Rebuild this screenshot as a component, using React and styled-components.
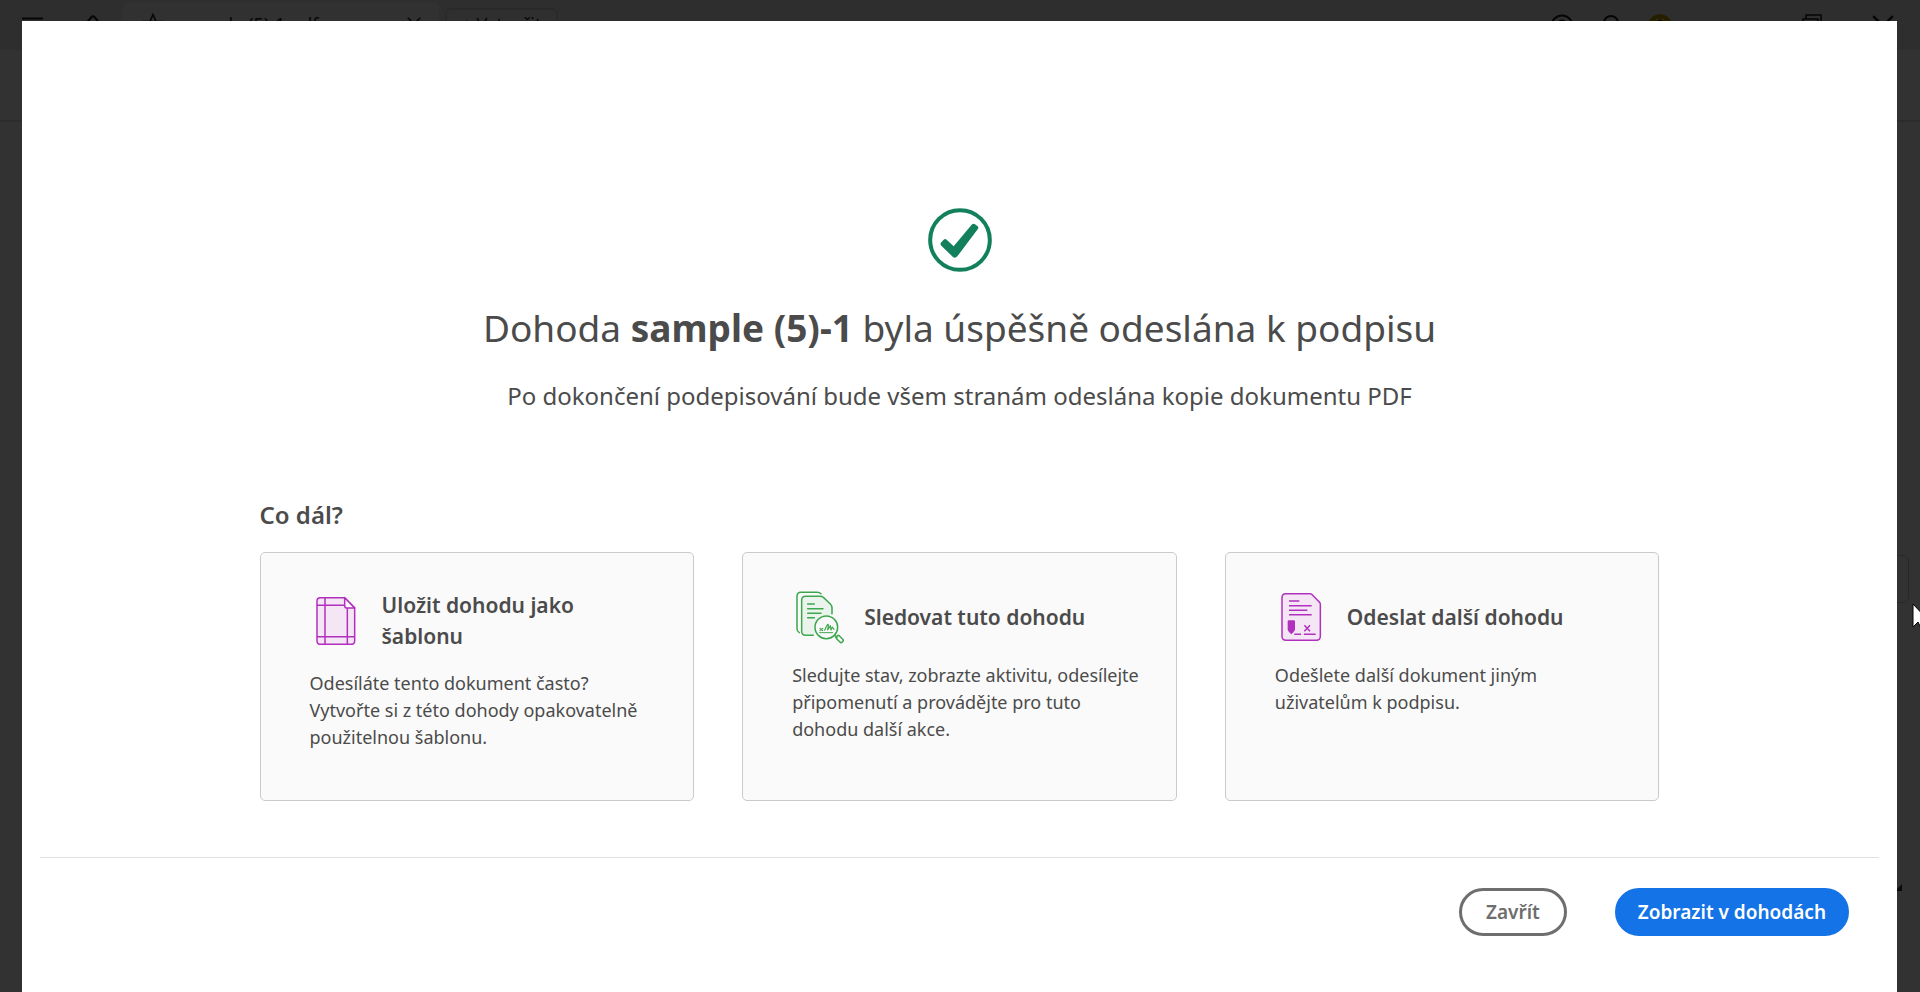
import React from 'react'
import styled, { createGlobalStyle } from 'styled-components';

const MenuIcon = () => (
  <svg width="22" height="18" viewBox="0 0 22 18" stroke="#1c1c1c" strokeWidth="2">
    <path d="M0 1.5h21M0 9h21M0 16.5h21" />
  </svg>
)

const HomeIcon = () => (
  <svg width="22" height="22" viewBox="0 0 22 22" fill="none" stroke="#1c1c1c" strokeWidth="2">
    <path d="M2 11 9.500 2q1.500-1.500 3 0L20 11M5 9v11h12V9" />
  </svg>
)

const StarIcon = () => (
  <svg width="22" height="22" viewBox="0 0 22 22" fill="none" stroke="#1c1c1c" strokeWidth="1.600">
    <path d="M11 1.500 14 8.500h7l-5.500 4.500 2 7L11 16l-6.500 4 2-7L1 8.500h7z" />
  </svg>
)

const HelpIcon = () => (
  <svg width="24" height="24" viewBox="0 0 24 24" fill="none" stroke="#1c1c1c" strokeWidth="2">
    <circle cx="12" cy="12" r="10.500" />
    <path d="M9 9.500c0-4 6-4 6 0 0 2.500-3 2-3 5M12 16.500v2" />
  </svg>
)

const BellIcon = () => (
  <svg width="22" height="24" viewBox="0 0 22 24" fill="none" stroke="#1c1c1c" strokeWidth="2">
    <path d="M4 17V9c0-9.500 14-9.500 14 0v8l2 2H2zM9 21h4" />
  </svg>
)

const AvatarIcon = () => (
  <svg width="24" height="24" viewBox="0 0 24 24">
    <circle cx="12" cy="12" r="12" fill="#b89c00" />
    <circle cx="12" cy="12" r="6" fill="#6a1400" />
    <path d="M8 6l1-2 1 2zM14 6l1-2 1 2z" fill="#fff" />
  </svg>
)

const RestoreIcon = () => (
  <svg width="20" height="24" viewBox="0 0 20 24" fill="none" stroke="#1c1c1c" strokeWidth="1.500">
    <path d="M4 5V1h15v16h-3M1 5h15v18H1z" />
  </svg>
)

const CloseIcon = ({ size = 22 }) => (
  <svg width={size} height={size} viewBox="0 0 18 18" stroke="#1c1c1c" strokeWidth="2">
    <path d="M1 1l16 16M17 1 1 17" />
  </svg>
)

const CheckIcon = () => (
  <svg width="64" height="64" viewBox="54 54 192 192">
    <circle cx="150" cy="150" r="89.500" fill="none" stroke="#12805c" strokeWidth="12" />
    <path
      d="M94 157 101 149Q105 145 110 149L131 169 185 104Q190 99 195 103L203 109Q207 113 203 118L142 199Q135 207 128 200L94 167Q89 162 94 157Z"
      fill="#12805c"
    />
  </svg>
)

const TemplateIcon = () => (
  <svg width="52" height="54" viewBox="30 42 156 162" fill="none" stroke="#b130bd" strokeWidth="4.500" strokeLinejoin="round">
    <path d="M61 53H134L164 83V182Q164 193 153 193H62Q51 193 51 182V63Q51 53 61 53Z" fill="#f4e6f5" />
    <path d="M134 53V77Q134 84 141 84H164Z" fill="#fafafa" />
    <path d="M75 53V193M142 85V193M51 76H134M51 170H164" />
  </svg>
)

const TrackIcon = () => (
  <svg width="52" height="54" viewBox="36 30 156 162" fill="none" stroke="#3da74e" strokeWidth="4.500" strokeLinecap="round" strokeLinejoin="round">
    <path d="M58 158Q51 154 51 146V49Q51 37 63 37H111Q119 37 123 41" />
    <path d="M100 166H77Q65 166 65 154V61Q65 49 77 49H120Q126 49 131 53L151 72Q156 77 156 84V101" fill="#ebf4ec" />
    <path d="M83 72H103M83 86H129M83 100H123M83 113H103" />
    <circle cx="139" cy="142" r="34" fill="#fafafa" />
    <path d="M119 158H158" strokeWidth="3" />
    <path d="M120 145l8 7M128 145l-8 7M134 151l7-15q5-7 4 2l-2 12 8-13 2 13 4-9 5 7" strokeWidth="3.500" />
    <path d="M164 166 171 173" />
    <rect x="167" y="171" width="24" height="12" rx="5" transform="rotate(45 179 177)" />
  </svg>
)

const SendIcon = () => (
  <svg width="52" height="54" viewBox="45 30 156 162" fill="none" stroke="#b130bd" strokeWidth="4.500" strokeLinejoin="round">
    <path d="M77 41H150Q153 41 155 43L177 65Q181 68 181 73V169Q181 181 169 181H78Q66 181 66 169V53Q66 41 77 41Z" fill="#f4e6f5" />
    <path d="M87 63H118M87 77H155M87 91H142M87 104H155M103 163H123M132 163H167" />
    <path d="M133 136l17 18M150 136l-17 18" />
    <path d="M83 124Q83 121 87 121H101Q105 121 105 124V148Q105 152 101 156L94 163 87 156Q83 152 83 148Z" fill="#b130bd" stroke="none" />
  </svg>
)

const steps = [
  {
    icon: TemplateIcon,
    title: 'Uložit dohodu jako šablonu',
    text: 'Odesíláte tento dokument často? Vytvořte si z této dohody opakovatelně použitelnou šablonu.',
  },
  {
    icon: TrackIcon,
    title: 'Sledovat tuto dohodu',
    text: 'Sledujte stav, zobrazte aktivitu, odesílejte připomenutí a provádějte pro tuto dohodu další akce.',
  },
  {
    icon: SendIcon,
    title: 'Odeslat další dohodu',
    text: 'Odešlete další dokument jiným uživatelům k podpisu.',
  },
]

const StepCard = ({ step }) => {
  const Icon = step.icon

  return (
    <Card type="button">
      <CardHead>
        <Icon />
        <CardTitle>{step.title}</CardTitle>
      </CardHead>
      <CardText>{step.text}</CardText>
    </Card>
  )
}

const App = () => {
  return (
    <>
      <GlobalStyle />
      <Shell>
        <TabBar>
          <MenuIcon />
          <HomeIcon />
          <Tab>
            <StarIcon />
            <TabName>sample (5)-1.pdf</TabName>
            <CloseIcon size={14} />
          </Tab>
          <CreateTab>+ Vytvořit</CreateTab>
          <WindowTools>
            <HelpIcon />
            <BellIcon />
            <AvatarIcon />
          </WindowTools>
          <WindowButtons>
            <RestoreIcon />
            <CloseIcon />
          </WindowButtons>
        </TabBar>
        <ToolBar />
        <SidePanel />
        <ResizeCorner />
      </Shell>
      <Backdrop>
        <Dialog role="dialog" aria-labelledby="sent-title">
          <Summary>
            <CheckIcon />
            <Title id="sent-title">
              Dohoda <strong>sample (5)-1</strong> byla úspěšně odeslána k podpisu
            </Title>
            <Subtitle>
              Po dokončení podepisování bude všem stranám odeslána kopie dokumentu PDF
            </Subtitle>
          </Summary>
          <NextSteps>
            <SectionTitle>Co dál?</SectionTitle>
            <CardGrid>
              {steps.map((step) => (
                <StepCard key={step.title} step={step} />
              ))}
            </CardGrid>
          </NextSteps>
          <Footer>
            <PillButton type="button">Zavřít</PillButton>
            <PillButton type="button" $primary>Zobrazit v dohodách</PillButton>
          </Footer>
        </Dialog>
      </Backdrop>
      <Pointer width="18" height="28" viewBox="0 0 18 28">
        <path d="M1 1v23l5-5 4 8 4-2-4-7h7z" fill="#fff" stroke="#000" />
      </Pointer>
    </>
  )
}

export default App

const GlobalStyle = createGlobalStyle`
  * {
    box-sizing: border-box;
  }
  body {
    margin: 0;
    overflow: hidden;
    color: #4b4b4b;
    font-family: "Noto Sans", "Open Sans", sans-serif;
  }
  button {
    font-family: inherit;
    color: inherit;
    cursor: pointer;
  }
  svg {
    flex-shrink: 0;
  }
`;
const Shell = styled.div`
  position: relative;
  height: 100vh;
  overflow: hidden;
  background-color: #f8f8f8;
`;
const TabBar = styled.header`
  display: flex;
  align-items: center;
  height: 50px;
  padding: 2px 26px 0 22px;
  gap: 38px;
  background-color: #e6e6e6;
`;
const Tab = styled.div`
  display: flex;
  align-items: center;
  align-self: stretch;
  width: 317px;
  margin-left: -20px;
  padding: 0 18px 4px 20px;
  border-radius: 6px 6px 0 0;
  background-color: #f2f2f2;
`;
const TabName = styled.span`
  flex: 1;
  padding-left: 18px;
  font-size: 18px;
  color: #1c1c1c;
`;
const CreateTab = styled.button`
  width: 113px;
  height: 36px;
  margin-left: -32px;
  padding: 0 0 4px;
  border: 2px solid #cfcfcf;
  border-radius: 6px;
  background-color: #ebebeb;
  font-size: 18px;
  color: #1c1c1c;
`;
const WindowTools = styled.div`
  display: flex;
  gap: 26px;
  margin-left: auto;
`;
const WindowButtons = styled.div`
  display: flex;
  align-items: center;
  gap: 50px;
  margin-left: 92px;
`;
const ToolBar = styled.div`
  height: 72px;
  border-bottom: 2px solid #dcdcdc;
`;
const SidePanel = styled.div`
  position: absolute;
  top: 555px;
  right: 11px;
  width: 50px;
  height: 48px;
  border: 1px solid #c4c4c4;
  border-radius: 6px;
`;
const ResizeCorner = styled.div`
  position: absolute;
  top: 884px;
  right: 18px;
  border-left: 7px solid transparent;
  border-bottom: 7px solid #333;
`;
const Backdrop = styled.div`
  position: fixed;
  inset: 0;
  display: flex;
  padding: 21px 23px 0 22px;
  background-color: rgba(0, 0, 0, 0.8);
`;
const Dialog = styled.main`
  flex: 1;
  background-color: #fff;
`;
const Summary = styled.section`
  display: flex;
  flex-direction: column;
  align-items: center;
  padding-top: 187px;
  text-align: center;
`;
const Title = styled.h1`
  margin: 32px 0 0;
  font-size: 37px;
  line-height: 48px;
  font-weight: 400;

  strong {
    font-weight: 700;
  }
`;
const Subtitle = styled.p`
  margin: 28px 0 0;
  font-size: 24px;
  line-height: 32px;
`;
const NextSteps = styled.section`
  max-width: 1400px;
  margin: 87px auto 0;
`;
const SectionTitle = styled.h2`
  margin: 0 0 21px;
  font-size: 24px;
  line-height: 32px;
  font-weight: 600;
`;
const CardGrid = styled.div`
  display: grid;
  grid-template-columns: repeat(3, 1fr);
  gap: 48px;
`;
const Card = styled.button`
  display: flex;
  flex-direction: column;
  min-height: 249px;
  padding: 37px 32px 37px 49px;
  border: 1px solid #cacaca;
  border-radius: 5px;
  background-color: #fafafa;
  text-align: left;
`;
const CardHead = styled.span`
  display: flex;
  align-items: center;
  gap: 20px;
  margin-bottom: 18px;
  padding-right: 20px;
`;
const CardTitle = styled.strong`
  font-size: 21px;
  line-height: 31px;
  font-weight: 600;
`;
const CardText = styled.span`
  font-size: 18px;
  line-height: 27px;
`;
const Footer = styled.footer`
  display: flex;
  justify-content: flex-end;
  gap: 48px;
  margin: 56px 18px 0;
  padding: 30px 30px 0 0;
  border-top: 1px solid #e1e1e1;
`;
const PillButton = styled.button`
  height: 48px;
  padding: 0 ${(props) => props.$primary ? "20px" : "24px"};
  border: 3px solid ${(props) => props.$primary ? "#1473e6" : "#6e6e6e"};
  border-radius: 24px;
  background-color: ${(props) => props.$primary ? "#1473e6" : "#fff"};
  color: ${(props) => props.$primary ? "#fff" : "#6e6e6e"};
  font-size: 19px;
  font-weight: 600;
`;
const Pointer = styled.svg`
  position: fixed;
  top: 603px;
  left: calc(100% - 8px);
`;
